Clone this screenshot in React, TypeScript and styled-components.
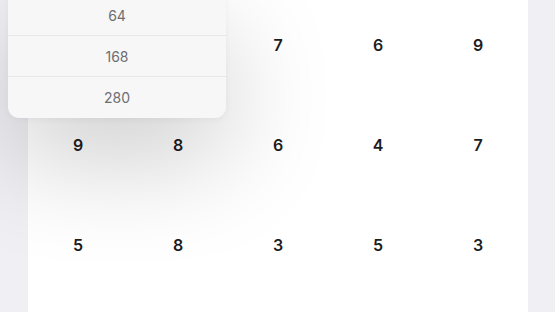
import React from 'react';
import styled, { createGlobalStyle } from 'styled-components';

const GlobalStyle = createGlobalStyle`
  html, body {
    margin: 0;
    padding: 0;
    height: 100%;
    overflow: hidden;
    background: #efeff4;
    font-family: Inter, "Liberation Sans", sans-serif;
  }
`;

// Page & board
const Page = styled.div`
  position: relative;
  width: 555px;
  height: 312px;
  overflow: hidden;
  background: #efeff4;
`;

const Board = styled.div`
  margin: -5px 28px 0;
  width: 500px;
  background: #ffffff;
  display: grid;
  grid-template-columns: repeat(5, 100px);
  grid-auto-rows: 100px;
  height: 330px;
`;

const Cell = styled.div`
  display: flex;
  align-items: center;
  justify-content: center;
  font-size: 16px;
  font-weight: 600;
  color: #1c1c1e;
`;

// Popover menu
const Popover = styled.div`
  position: absolute;
  left: 8px;
  top: -5px;
  width: 218px;
  background: #f7f7f7;
  border-radius: 0 0 11px 11px;
  box-shadow: 0 40px 110px rgba(0, 0, 0, 0.2), 0 2px 6px rgba(0, 0, 0, 0.04);
  overflow: hidden;
`;

type OptionProps = {
  last?: boolean;
};

const Option = styled.div<OptionProps>`
  height: 41px;
  display: flex;
  align-items: center;
  justify-content: center;
  font-size: 14px;
  color: #6d6d72;
  border-bottom: ${props => (props.last ? 'none' : '1px solid #e8e8ea')};
  box-sizing: border-box;
`;

const grid = [
  [3, 2, 7, 6, 9],
  [9, 8, 6, 4, 7],
  [5, 8, 3, 5, 3],
];

const options = ['64', '168', '280'];

export default function App() {
  return (
    <Page>
      <GlobalStyle />
      <Board>
        {grid.flat().map((n, i) => (
          <Cell key={i}>{n}</Cell>
        ))}
      </Board>
      <Popover>
        {options.map((o, i) => (
          <Option key={o} last={i === options.length - 1}>
            {o}
          </Option>
        ))}
      </Popover>
    </Page>
  );
}
